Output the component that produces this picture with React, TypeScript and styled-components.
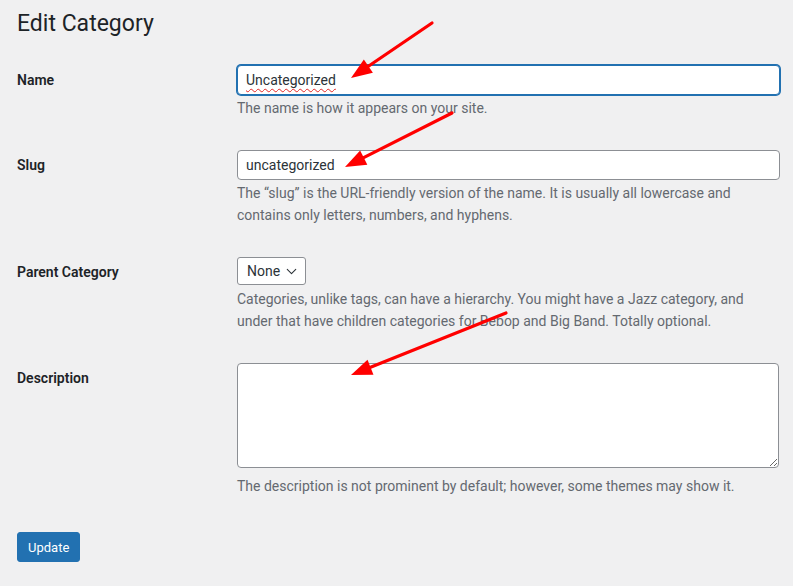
import React from 'react'
import styled,{createGlobalStyle} from 'styled-components'
import {ChevronDown} from 'lucide-react'

const ARROW_HEAD_LENGTH=21
const ARROW_HEAD_HALF_WIDTH=8

interface IArrow{
    from:[number,number];
    to:[number,number];
}

const ARROWS:IArrow[]=[
    {from:[432,23],to:[351,78]},
    {from:[452,113],to:[345,167]},
    {from:[506,313],to:[351,375]},
]

const GlobalStyle=createGlobalStyle`
html,body{
margin:0;
padding:0;
background:#f0f0f1;
}
body{
font-family:Roboto,"Liberation Sans",Arial,sans-serif;
color:#3c434a;
}
`

/**
 * builds the head polygon of an annotation arrow
 */
const headPoints=({from,to}:IArrow):string=>{
    const dx=to[0]-from[0]
    const dy=to[1]-from[1]
    const length=Math.hypot(dx,dy)
    const ux=dx/length
    const uy=dy/length
    const bx=to[0]-ux*ARROW_HEAD_LENGTH
    const by=to[1]-uy*ARROW_HEAD_LENGTH
    const nx=-uy*ARROW_HEAD_HALF_WIDTH
    const ny=ux*ARROW_HEAD_HALF_WIDTH
    return `${to[0]},${to[1]} ${bx+nx},${by+ny} ${bx-nx},${by-ny}`
}

const Annotations:React.FC=():React.ReactElement=>(
    <Overlay width='793' height='586' viewBox='0 0 793 586'>
        {ARROWS.map(arrow=>{
            const dx=arrow.to[0]-arrow.from[0]
            const dy=arrow.to[1]-arrow.from[1]
            const length=Math.hypot(dx,dy)
            const endX=arrow.to[0]-dx/length*(ARROW_HEAD_LENGTH-4)
            const endY=arrow.to[1]-dy/length*(ARROW_HEAD_LENGTH-4)
            return (
                <g key={arrow.from.join('-')}>
                    <line x1={arrow.from[0]} y1={arrow.from[1]} x2={endX} y2={endY} stroke='#ff0000' strokeWidth='3.2' strokeLinecap='round' />
                    <polygon points={headPoints(arrow)} fill='#ff0000' />
                </g>
            )
        })}
    </Overlay>
)

const App:React.FC=():React.ReactElement=>(
    <>
        <GlobalStyle />
        <Page>
            <Heading>Edit Category</Heading>
            <Form onSubmit={e=>e.preventDefault()}>
                <Row>
                    <Label htmlFor='tag-name'>Name</Label>
                    <Field>
                        <InputWrap>
                            <TextInput id='tag-name' defaultValue='Uncategorized' focused spellCheck={false} />
                            <MisspellMark aria-hidden>Uncategorized</MisspellMark>
                        </InputWrap>
                        <Description>The name is how it appears on your site.</Description>
                    </Field>
                </Row>
                <Row>
                    <Label htmlFor='slug'>Slug</Label>
                    <Field>
                        <TextInput id='slug' defaultValue='uncategorized' spellCheck={false} />
                        <Description>The “slug” is the URL-friendly version of the name. It is usually all lowercase and<br />contains only letters, numbers, and hyphens.</Description>
                    </Field>
                </Row>
                <Row>
                    <Label htmlFor='parent'>Parent Category</Label>
                    <Field>
                        <SelectWrap>
                            <Select id='parent' defaultValue='-1'>
                                <option value='-1'>None</option>
                            </Select>
                            <SelectChevron size={17} strokeWidth={1.5} />
                        </SelectWrap>
                        <Description>Categories, unlike tags, can have a hierarchy. You might have a Jazz category, and<br />under that have children categories for Bebop and Big Band. Totally optional.</Description>
                    </Field>
                </Row>
                <Row>
                    <Label htmlFor='description'>Description</Label>
                    <Field>
                        <TextArea id='description' />
                        <Description>The description is not prominent by default; however, some themes may show it.</Description>
                    </Field>
                </Row>
                <Submit>
                    <PrimaryButton type='submit'>Update</PrimaryButton>
                </Submit>
            </Form>
            <Annotations />
        </Page>
    </>
)

export default App

const Page=styled.div`
position:relative;
box-sizing:border-box;
width:793px;
height:586px;
padding:0 13px 0 17px;
overflow:hidden;
`

const Heading=styled.h1`
margin:0;
padding-top:9px;
font-size:23px;
font-weight:400;
line-height:30px;
color:#1d2327;
`

const Form=styled.form`
display:flex;
flex-direction:column;
gap:30.5px;
margin-top:26px;
`

const Row=styled.div`
display:grid;
grid-template-columns:220px 1fr;
`

const Label=styled.label`
font-size:14px;
font-weight:600;
line-height:30px;
color:#1d2327;
`

const Field=styled.div`
display:flex;
flex-direction:column;
min-width:0;
`

const InputWrap=styled.div`
position:relative;
`

interface ITextInputProps{
    focused?:boolean;
}

const TextInput=styled.input.withConfig({shouldForwardProp:prop=>prop!=='focused'})<ITextInputProps>`
display:block;
box-sizing:border-box;
width:100%;
height:30px;
margin:0;
padding:0 8px;
font-family:inherit;
font-size:14px;
color:#2c3338;
background:#fff;
border:1px solid ${({focused})=>focused?'#2271b1':'#8c8f94'};
border-radius:4px;
box-shadow:${({focused})=>focused?'0 0 0 1px #2271b1':'none'};
outline:none;
`

const MisspellMark=styled.span`
position:absolute;
top:0;
left:9px;
font-size:14px;
line-height:30px;
color:transparent;
text-decoration:underline wavy #e32626;
text-decoration-thickness:1px;
text-underline-offset:3px;
pointer-events:none;
`

const Description=styled.p`
margin:3px 0 0;
font-size:14px;
line-height:21.5px;
color:#646970;
white-space:nowrap;
`

const SelectWrap=styled.div`
position:relative;
align-self:flex-start;
margin-bottom:1.5px;
`

const Select=styled.select`
display:block;
box-sizing:border-box;
width:69px;
height:28px;
margin:0;
padding:0 24px 0 9px;
font-family:inherit;
font-size:14px;
color:#2c3338;
background:#fff;
border:1px solid #8c8f94;
border-radius:3px;
appearance:none;
-webkit-appearance:none;
outline:none;
`

const SelectChevron=styled(ChevronDown)`
position:absolute;
top:6px;
right:6px;
color:#2c3338;
pointer-events:none;
`

const TextArea=styled.textarea`
display:block;
box-sizing:border-box;
width:542px;
height:105px;
margin:0 0 5px;
padding:2px 6px;
font-family:inherit;
font-size:14px;
color:#2c3338;
background:#fff;
border:1px solid #8c8f94;
border-radius:4px;
outline:none;
`

const Submit=styled.div`
margin-top:4.5px;
`

const PrimaryButton=styled.button`
box-sizing:border-box;
height:30px;
padding:0 10px;
font-family:inherit;
font-size:13px;
color:#fff;
background:#2271b1;
border:1px solid #2271b1;
border-radius:3px;
cursor:pointer;
`

const Overlay=styled.svg`
position:absolute;
top:0;
left:0;
pointer-events:none;
`
